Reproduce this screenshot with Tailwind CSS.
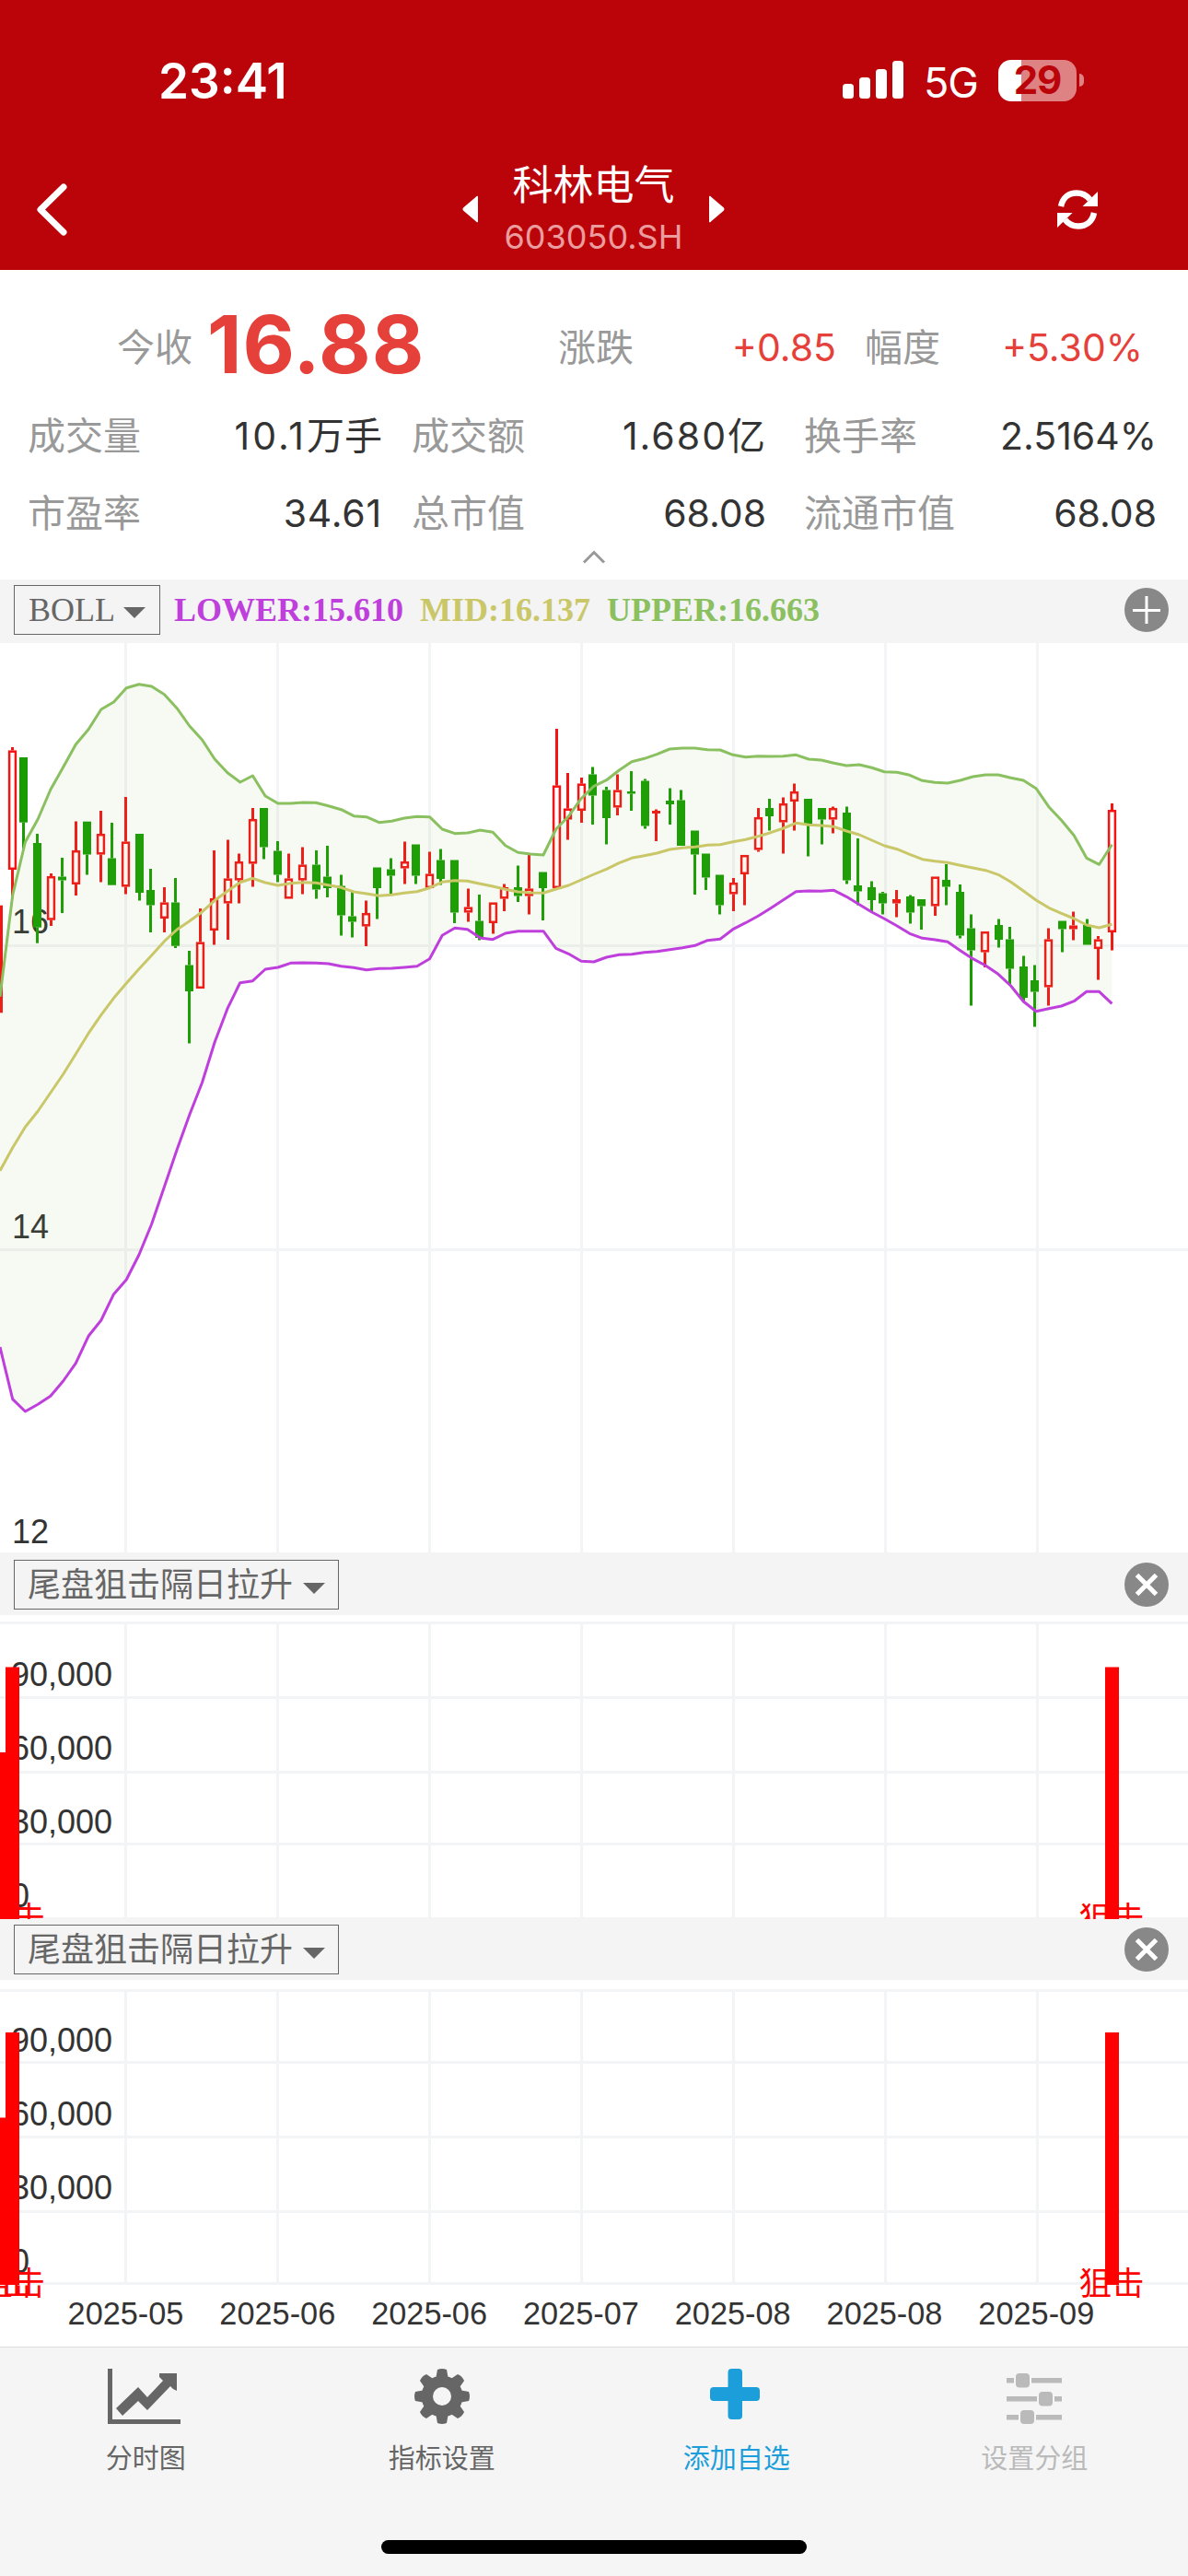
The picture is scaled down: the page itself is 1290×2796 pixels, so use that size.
<!DOCTYPE html>
<html lang="zh-CN">
<head>
    <meta charset="UTF-8">
    <meta name="viewport" content="width=device-width, initial-scale=1.0">
    <title>科林电气 603050.SH</title>
    <script src="https://cdn.jsdelivr.net/npm/@tailwindcss/browser@4"></script>
</head>
<body class="bg-white w-[1290px] h-[2796px] overflow-hidden font-[Inter,'Noto_Sans_CJK_SC',sans-serif] text-[#333]">

    <!-- Header -->
    <header class="h-[293px] bg-[#bb0409] text-white flex flex-col">
        <div class="h-[174px] flex items-center justify-between pl-[172px] pr-[113px]">
            <span class="text-[53px] leading-none font-semibold mt-[2px]">23:41</span>
            <div class="flex items-center">
                <svg class="w-[66px] h-[42px]" viewBox="0 0 66 42" fill="#fff">
                    <rect x="0" y="25" width="12" height="16" rx="3.5"/>
                    <rect x="18" y="18" width="12" height="23" rx="3.5"/>
                    <rect x="36" y="9" width="12" height="32" rx="3.5"/>
                    <rect x="54" y="0" width="12" height="41" rx="3.5"/>
                </svg>
                <span class="text-[45px] leading-none tracking-[-1px] ml-[22px] mt-[4px] w-[58px] whitespace-nowrap">5G</span>
                <div class="ml-[23px] w-[85px] h-[45px] rounded-[14px] overflow-hidden bg-linear-to-r from-white from-29% to-[#df8284] to-29% flex items-center justify-center">
                    <span class="text-[42px] leading-none font-bold tracking-[-1px] text-[#bb0409]">29</span>
                </div>
                <div class="ml-[3px] w-[5px] h-[14px] rounded-r-full bg-[#df8284]"></div>
            </div>
        </div>
        <div class="h-[106px] flex items-center justify-between pl-[39px] pr-[97px]">
            <svg class="w-[34px] h-[57px]" viewBox="0 0 34 57" fill="none" stroke="#fff" stroke-width="7" stroke-linecap="round" stroke-linejoin="round">
                <path d="M30 4L5 28.5L30 53"/>
            </svg>
            <div class="flex items-center ml-[69px]">
                <svg class="w-[17px] h-[30px]" viewBox="0 0 17 30" fill="#fff"><path d="M17 1V29Q16 30 14.500 28L1 16.500Q0 15 1 13.500L14.500 2Q16 0 17 1Z"/></svg>
                <div class="w-[251px] flex flex-col items-center">
                    <span class="text-[44px] leading-[52px]">科林电气</span>
                    <span class="text-[36px] leading-[50px] text-[#ea9c9e] mt-[5px] -mb-[2px]">603050.SH</span>
                </div>
                <svg class="w-[17px] h-[30px]" viewBox="0 0 17 30" fill="#fff"><path d="M0 1V29Q1 30 2.500 28L16 16.500Q17 15 16 13.500L2.500 2Q1 0 0 1Z"/></svg>
            </div>
            <svg class="w-[46px] h-[45px]" viewBox="0 0 46 45">
                <path d="M5 19C7 9 14 4.500 22 4.500C28 4.500 33 7 36.500 11.500" fill="none" stroke="#fff" stroke-width="6.500"/>
                <path d="M45 3V19H28.500Z" fill="#fff"/>
                <path d="M41 26C39 36 32 40.500 24 40.500C18 40.500 13 38 9.500 33.500" fill="none" stroke="#fff" stroke-width="6.500"/>
                <path d="M1 42V26H17.500Z" fill="#fff"/>
            </svg>
        </div>
    </header>

    <!-- Quote -->
    <section class="h-[336px] text-[41px] leading-none flex flex-col pt-[36px]">
        <div class="h-[96px] flex items-center">
            <span class="text-[#999] w-[98px] ml-[127px]">今收</span>
            <span class="text-[87px] font-bold text-[#e5403a] w-[381px] tracking-[1px] -mt-[8px]">16.88</span>
            <span class="text-[#999] w-[83px]">涨跌</span>
            <span class="text-[#e5403a] w-[219px] text-right">+0.85</span>
            <span class="text-[#999] w-[83px] ml-[31px]">幅度</span>
            <span class="text-[#e5403a] w-[219px] text-right">+5.30%</span>
        </div>
        <div class="h-[84px] mt-[6px] flex items-center pl-[30px]">
            <div class="w-[385px] flex justify-between"><span class="text-[#999]">成交量</span><span><span class="tracking-[3px]">10.1</span>万手</span></div>
            <div class="w-[384px] ml-[32px] flex justify-between"><span class="text-[#999]">成交额</span><span><span class="tracking-[2px]">1.680</span>亿</span></div>
            <div class="w-[383px] ml-[42px] flex justify-between"><span class="text-[#999]">换手率</span><span>2.5164%</span></div>
        </div>
        <div class="h-[84px] flex items-center pl-[30px]">
            <div class="w-[385px] flex justify-between"><span class="text-[#999]">市盈率</span><span class="tracking-[0.8px]">34.61</span></div>
            <div class="w-[385px] ml-[32px] flex justify-between"><span class="text-[#999]">总市值</span><span>68.08</span></div>
            <div class="w-[383px] ml-[41px] flex justify-between"><span class="text-[#999]">流通市值</span><span>68.08</span></div>
        </div>
        <svg class="w-[26px] h-[16px] mx-auto -mt-[2px]" viewBox="0 0 26 16" fill="none" stroke="#999" stroke-width="3"><path d="M2 13.500L13 2.500L24 13.500"/></svg>
    </section>

    <!-- Main chart -->
    <div class="h-[69px] bg-[#f4f4f4] flex items-center pl-[15px] pr-[21px] pb-[3px] font-['Liberation_Serif','Noto_Sans_CJK_SC',serif] text-[36px] leading-none">
        <div class="w-[159px] h-[54px] border border-[#666] text-[#666] flex items-center pl-[15px] gap-[9px] pb-px">
            BOLL
            <svg class="w-[24px] h-[12px] mt-[7px]" viewBox="0 0 24 12" fill="#666"><path d="M0 0H24L12 12Z"/></svg>
        </div>
        <span class="ml-[15px] w-[267px] font-bold text-[#bf3fdc]">LOWER:15.610</span>
        <span class="w-[203px] font-bold text-[#c9c768]">MID:16.137</span>
        <span class="font-bold text-[#8bc060]">UPPER:16.663</span>
        <svg class="w-[48px] h-[48px] ml-auto" viewBox="0 0 48 48"><circle cx="24" cy="24" r="24" fill="#888"/><path d="M9 24.500H39M24 9V39" stroke="#fff" stroke-width="3"/></svg>
    </div>
    <svg id="kline" class="block w-[1290px] h-[987px] font-['Liberation_Sans',sans-serif]" viewBox="0 698 1290 987"></svg>

    <!-- Sub chart 1 -->
    <div class="h-[68px] bg-[#f4f4f4] flex items-center justify-between pl-[15px] pr-[21px] pt-[2px]">
        <div class="w-[353px] h-[54px] border border-[#666] text-[#666] text-[36px] leading-none flex items-center pl-[14px] gap-[11px]">
            尾盘狙击隔日拉升
            <svg class="w-[24px] h-[12px] mt-[7px]" viewBox="0 0 24 12" fill="#666"><path d="M0 0H24L12 12Z"/></svg>
        </div>
        <svg class="w-[48px] h-[48px]" viewBox="0 0 48 48"><circle cx="24" cy="24" r="24" fill="#888"/><path d="M13.500 13.500L34.500 34.500M34.500 13.500L13.500 34.500" stroke="#fff" stroke-width="5"/></svg>
    </div>
    <svg id="sub1" class="block relative w-[1290px] h-[330px] -mb-[2px] font-['Liberation_Sans','Noto_Sans_CJK_SC',sans-serif] overflow-hidden" viewBox="0 0 1290 330"></svg>

    <!-- Sub chart 2 -->
    <div class="h-[68px] bg-[#f4f4f4] flex items-center justify-between pl-[15px] pr-[21px] pt-[2px]">
        <div class="w-[353px] h-[54px] border border-[#666] text-[#666] text-[36px] leading-none flex items-center pl-[14px] gap-[11px]">
            尾盘狙击隔日拉升
            <svg class="w-[24px] h-[12px] mt-[7px]" viewBox="0 0 24 12" fill="#666"><path d="M0 0H24L12 12Z"/></svg>
        </div>
        <svg class="w-[48px] h-[48px]" viewBox="0 0 48 48"><circle cx="24" cy="24" r="24" fill="#888"/><path d="M13.500 13.500L34.500 34.500M34.500 13.500L13.500 34.500" stroke="#fff" stroke-width="5"/></svg>
    </div>
    <svg id="sub2" class="block w-[1290px] h-[398px] font-['Liberation_Sans','Noto_Sans_CJK_SC',sans-serif] overflow-hidden" viewBox="0 0 1290 398"></svg>

    <!-- Tab bar -->
    <footer class="h-[249px] bg-[#f5f5f5] border-t border-[#ddd] flex flex-col text-[29px] leading-none text-[#666]">
        <nav class="flex pt-[23px] h-[209px]">
            <div class="w-[317px] flex flex-col items-center">
                <svg class="w-[80px] h-[60px] -ml-[3px]" viewBox="0 0 80 60" fill="#666"><path d="M0 0H5V55H79V60H0Z"/><path d="M9 43L33 20L43 31L60 13L56 9V5H75V24L71 22L68 19L43 45L33 35L16 51Z"/></svg>
                <span class="mt-[23px]">分时图</span>
            </div>
            <div class="w-[327px] flex flex-col items-center">
                <svg class="w-[60px] h-[60px]" viewBox="0 0 60 60"><g fill="#666"><circle cx="30" cy="30" r="22.500"/><g id="teeth"></g></g><circle cx="30" cy="30" r="10" fill="#f5f5f5"/></svg>
                <span class="mt-[23px]">指标设置</span>
            </div>
            <div class="w-[314px] flex flex-col items-center text-[#1b9ed9]">
                <svg class="w-[54px] h-[60px] -ml-[4px]" viewBox="0 0 54 60" fill="#1b9ed9"><rect x="19.500" y="0" width="15.500" height="55" rx="4"/><rect x="0" y="20" width="54" height="15" rx="4"/></svg>
                <span class="mt-[23px]">添加自选</span>
            </div>
            <div class="w-[334px] flex flex-col items-center text-[#bababa]">
                <svg class="w-[60px] h-[60px]" viewBox="0 0 60 60" fill="#bababa">
                    <path d="M0 10H8V15.500H0ZM27 10H60V15.500H27ZM0 30H33V35.500H0ZM52 30H60V35.500H52ZM0 50H13V55.500H0ZM32 50H60V55.500H32Z"/>
                    <rect x="10" y="5" width="15" height="15.500" rx="4"/><rect x="35" y="25" width="15" height="15.500" rx="4"/><rect x="15" y="45" width="15" height="15" rx="4"/>
                </svg>
                <span class="mt-[23px]">设置分组</span>
            </div>
        </nav>
        <div class="w-[462px] h-[15px] rounded-full bg-black mx-auto"></div>
    </footer>

    <script>
        const GRID_X = [135, 300, 465, 630, 795, 960, 1125];
        const DATES = ["2025-05", "2025-06", "2025-06", "2025-07", "2025-08", "2025-08", "2025-09"];
        const GRID = "#f3f4f6";
        const STEP = 13.72;

        const rect = (x, y, w, h, fill) => `<rect x="${x}" y="${y}" width="${w}" height="${h}" fill="${fill}"/>`;

        // body left, high, body top, body bottom, low, rising
        const candles = [
            [9,811,814.5,944,975,1],[21,822,822,892.7,921,0],[36,905,915,1006.7,1023.7,0],[51,948,951,998.7,1005,1],
            [63,931,951.5,955.5,991,0],[78,891.5,923,960,972,1],[90,891.7,891.7,927.5,949.5,0],[105,880,905,927.5,957.5,1],
            [117,893,931.5,960.7,960.7,0],[132,865,913.5,962.5,970.5,1],[147,905,905,969,977.5,0],[159,943,966,982.5,1012,0],
            [174,963,979.5,997,1012,1],[186,953,979.5,1026.7,1029,0],[201,1032,1047.5,1076,1132.5,0],[213,986,1022.5,1073,1073,1],
            [228,923,975,1010,1025.5,1],[243,911.5,953.5,980.5,1020,1],[255,926.5,935,955.5,980.5,1],[270,877,889,937.5,962.5,1],
            [282,877,877,919.5,932.5,0],[297,913,923.5,949.5,957.5,0],[309,926.5,953.5,975.5,975.5,1],[324,919.5,938.5,955.5,970.5,1],
            [339,923,938.5,965.5,975.5,0],[351,918,951.5,964,974,0],[366,949.5,961.5,993.5,1015.5,0],[378,966.5,994.5,1000.5,1017.5,0],
            [393,977.5,991,1005.5,1027,1],[405,941.5,941.5,964,997.5,0],[420,931.5,943.5,950.5,971.5,0],[435,913.5,935,942.5,959.5,1],
            [447,916.5,916.5,950.5,959.5,0],[462,924.5,948.5,964,964,1],[474,921.5,933.5,954,960.5,0],[489,933.5,933.5,990.5,1002,0],
            [504,964.5,984.5,990.5,1000.5,1],[516,971,999.5,1018,1020.5,0],[531,979.5,979.5,1002,1013.5,1],[543,959.5,963,975.5,989,1],
            [558,939.5,963,972.5,979,0],[570,928,964.5,972.5,992.5,1],[585,946.5,946.5,964,999,0],[600,791,852.5,964,964,1],
            [612,839,877.5,889.5,911.5,1],[627,844,850.5,880,893,1],[639,832.5,840.5,863.5,895,0],[654,854,857.5,888,916.5,0],
            [666,840.5,857.5,876.5,885,1],[681,837,859,861.5,880,0],[696,845.5,847.5,896.5,899.5,0],[708,878.5,880,883,913,1],
            [723,855.5,869,873,895,0],[735,857.5,868.5,918,918,0],[750,901.5,901.5,927.5,971,0],[762,926.5,926.5,952.5,966,0],
            [777,949.5,949.5,982.5,992.5,0],[792,953,958,970.5,989,1],[804,928,928,949,982.5,1],[819,877,887,922.5,924.5,1],
            [831,867,877,886,901.5,0],[846,865.5,872,892.5,926.5,1],[858,850.5,859,870,901.5,1],[873,867,867,894.5,929.5,0],
            [888,877,877,889.5,916.5,0],[900,875.5,877,889.5,904.5,1],[915,875.5,882,955.5,959.5,0],[927,910,961,967.5,982.5,0],
            [942,956.5,963,977,989,0],[954,968,969.5,980.5,992.5,0],[969,966,976,980.5,995.5,1],[984,971.5,973,990.5,1002.5,0],
            [996,976,976,983.5,1009,0],[1011,951.5,951.5,983.5,994,1],[1023,938,955,962.5,982.5,0],[1038,960,968,1015.5,1018.5,0],
            [1050,992.5,1007.5,1031.5,1091.5,0],[1065,1011,1011,1033.5,1050,1],[1080,997.5,1004,1020,1028.5,0],[1092,1006,1019.5,1051.5,1068,0],
            [1107,1037.5,1049,1083,1087,0],[1119,1047.5,1064,1076.5,1114.5,0],[1134,1007.5,1019.5,1071.5,1091.5,1],[1149,999.5,999.5,1008.5,1033.5,0],
            [1161,989.5,1004.5,1008.5,1020.5,1],[1176,997.5,1004,1025.5,1025.5,0],[1188,1016,1019.5,1030,1063.5,1],[1203,872,879,1012,1031.5,1]
        ];
        const upper = [1081.7,971.7,914,889,857,832.7,808,791.7,770,762,746.7,742.7,745,753.7,768.7,788,803,824,838.7,849,842,864,872,872,871,
            871.3,874.7,878.7,885.7,886.7,892.7,891.3,888,886.3,886.7,900,904.7,904,901,903.3,917.7,925.3,927,928,900,886,866.7,853.3,
            846.7,836,826.7,823.3,818.7,813,812,812,813.7,814,819.3,821.7,820.7,821,820.7,819.3,824,825,828.3,831,
            830,833.3,837.7,838.3,841.3,847.3,849.3,850,847,843,841,841,844.3,847,855.7,875.7,890.3,906.7,931.3,938.3,916.7];
        const mid = [1270.7,1245.7,1223.3,1206,1186,1166,1144,1121.7,1101.7,1083.3,1067.3,1051.7,1037,1021.7,1009,999.7,989.7,977.3,967.3,957.7,953.3,958,961,958.7,957.7,
            958.3,960.7,963.3,968,970,972.3,971.3,969.3,967.7,963.7,957.3,955.7,956.3,959.3,962,965.3,968,969,969.3,965,961,955,949,
            943.3,936.7,931.3,928.7,926,922,920.3,919.3,917.3,916.7,913.7,911.3,907.7,903.7,899,893.3,895.3,896,897.3,902,
            906,912,918,921.7,927.3,932.7,934.7,936.3,939.3,942,944.7,949.3,957.3,967,977,985.3,991.3,997,1004,1007,1003.3];
        const lower = [1462,1518.7,1532,1524.3,1515.3,1499,1479.7,1450.3,1433,1404.7,1389,1362,1328.7,1288.3,1248,1210,1175,1131,1094.7,1066.7,1064.7,1052,1050,1045.3,1045,
            1045.3,1046,1048.7,1050.3,1052.7,1051.3,1051,1050,1048.7,1040.7,1015.3,1007.3,1008.7,1018,1019.7,1013,1010.7,1010.7,1010.7,1029.3,1035.3,1043.3,1044,
            1039,1036.3,1035.7,1033.7,1032.7,1030.7,1028.7,1026.3,1020.7,1019.3,1008.7,1001.7,994.3,985.7,976.7,967.7,967,967.3,966.3,973.3,
            981.7,990,997.3,1005,1013.3,1018.3,1020,1022.3,1031.7,1040.7,1048,1057.3,1070,1087,1097.7,1094.7,1092,1086.7,1076.3,1076.3,1089.3];

        const points = (values) => values.map((y, i) => `${(i * STEP).toFixed(1)},${y}`);
        const line = (values, color) => `<polyline points="${points(values).join(" ")}" fill="none" stroke="${color}" stroke-width="3" stroke-linejoin="round"/>`;

        function drawKline() {
            let s = "";
            GRID_X.forEach(x => s += rect(x, 698, 3, 987, GRID));
            [1025, 1355].forEach(y => s += rect(0, y, 1290, 3, GRID));
            [[16, 1013], [14, 1344], [12, 1675]].forEach(([t, y]) => s += `<text x="13" y="${y}" font-size="36" fill="#333">${t}</text>`);
            s += rect(0, 982.7, 3, 116.6, "#f51414");
            candles.forEach(([x, high, top, bottom, low, up]) => {
                const color = up ? "#f51414" : "#189c00";
                s += rect(x + 3, high, 3, top - high, color) + rect(x + 3, bottom, 3, low - bottom, color);
                if (up && bottom - top > 5) {
                    s += `<rect x="${x + 1.1}" y="${top + 1.2}" width="6.8" height="${bottom - top - 2.4}" fill="#fff" stroke="${color}" stroke-width="2.5"/>`;
                } else {
                    s += rect(x, top, 9, bottom - top, color);
                }
            });
            s += `<polygon points="${points(upper).concat(points(lower).reverse()).join(" ")}" fill="#8bc060" fill-opacity="0.075"/>`;
            s += line(lower, "#bf3fdc") + line(mid, "#c9c768") + line(upper, "#8bc060");
            document.getElementById("kline").innerHTML = s;
        }

        function drawSub(id, rows, labelY, barTop, bottom, gridBottom, dates) {
            let s = "";
            GRID_X.forEach(x => s += rect(x, rows[0], 3, gridBottom - rows[0], GRID));
            rows.forEach(y => s += rect(0, y, 1290, 3, GRID));
            ["90,000", "60,000", "30,000", "0"].forEach((t, i) => {
                s += `<text x="12" y="${labelY + i * 80}" font-size="36" fill="#333">${t}</text>`;
            });
            [0, 13.5, 1207].forEach(x => {
                s += `<text x="${x}" y="${barTop + 285}" font-size="35.500" fill="#f00" text-anchor="middle">狙击</text>`;
            });
            s += rect(0, barTop + 92.5, 7, bottom - barTop - 92.5, "#f00");
            s += rect(6, barTop, 15, bottom - barTop, "#f00");
            s += rect(1200, barTop, 15, bottom - barTop, "#f00");
            if (dates) {
                DATES.forEach((d, i) => s += `<text x="${136.5 + i * 164.8}" y="374" font-size="34.300" fill="#333" text-anchor="middle">${d}</text>`);
            }
            document.getElementById(id).innerHTML = s;
        }

        drawKline();
        drawSub("sub1", [7, 88, 169, 247], 77, 56.5, 330, 328, false);
        drawSub("sub2", [10, 88, 169, 250, 328], 78, 57, 331, 328, true);

        // gear teeth
        let teeth = "";
        for (let a = 0; a < 360; a += 45) {
            teeth += `<path d="M23 12L25 1Q30 -1 35 1L37 12Z" transform="rotate(${a} 30 30)"/>`;
        }
        document.getElementById("teeth").innerHTML = teeth;
    </script>

</body>
</html>
